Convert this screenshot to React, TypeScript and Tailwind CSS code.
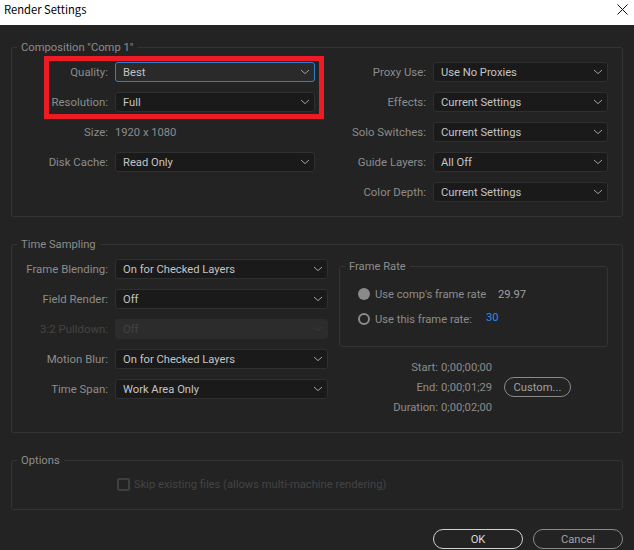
import type { ReactNode } from 'react';

function Chevron({ dim }: { dim?: boolean }) {
  return (
    <svg width="10" height="6" viewBox="0 0 10 6" fill="none" className={dim ? 'text-[#3a3a3a]' : 'text-[#a0a0a0]'}>
      <path d="M1 1l4 3.6L9 1" stroke="currentColor" strokeWidth="1" />
    </svg>
  );
}

function Dropdown({ value, width, focus, disabled }: { value: string; width: string; focus?: boolean; disabled?: boolean }) {
  let look = 'bg-[#1a1a1a] border-[#2f2f2f] text-[#c4c4c4]';
  if (focus) look = 'bg-[#2a2a2a] border-[#2f7fd4] text-[#c4c4c4]';
  if (disabled) look = 'bg-[#2c2c2c] border-[#2c2c2c] text-[#434343]';
  return (
    <div className={`${width} ${look} h-5 flex items-center justify-between pl-[7px] pr-[4px] border rounded-[3px] text-[11.2px]`}>
      <span className="pt-[2px]">{value}</span>
      <Chevron dim={disabled} />
    </div>
  );
}

function Row({ label, labelWidth, disabled, children }: { label: string; labelWidth: string; disabled?: boolean; children: ReactNode }) {
  return (
    <div className="flex items-center gap-[7px] h-5">
      <div className={`${labelWidth} pt-[2px] text-right text-[11.4px] ${disabled ? 'text-[#434343]' : 'text-[#8c8c8c]'}`}>{label}</div>
      {children}
    </div>
  );
}

function Group({ title, height, className, children }: { title: string; height: string; className?: string; children: ReactNode }) {
  return (
    <fieldset className={`${height} ${className ?? ''} border border-[#343434] rounded-[3px]`}>
      <legend className="ml-[5px] px-[4px] h-4 leading-[18px] text-[11.2px] text-[#8c8c8c]">{title}</legend>
      {children}
    </fieldset>
  );
}

function Radio({ filled, label }: { filled?: boolean; label: string }) {
  return (
    <div className="flex items-center gap-[5px] whitespace-nowrap">
      <div className={`size-[12px] rounded-full ${filled ? 'bg-[#8a8a8a]' : 'border-2 border-[#8a8a8a]'}`} />
      <span className="pt-[2px] text-[11.2px] text-[#8c8c8c]">{label}</span>
    </div>
  );
}

function Pill({ label, width, strong }: { label: string; width: string; strong?: boolean }) {
  return (
    <div className={`${width} h-5 flex items-center justify-center rounded-full border text-[11.2px] ${strong ? 'border-[#d0d0d0] text-[#d8d8d8]' : 'border-[#8a8a8a] text-[#a0a0a0]'}`}>
      <span className="pt-[2px]">{label}</span>
    </div>
  );
}

function TimeRow({ label, value, children }: { label: string; value: string; children?: ReactNode }) {
  return (
    <div className="flex items-center h-5 text-[11.2px] text-[#8c8c8c]">
      <span className="w-[99px] pt-[2px] text-right">{label}</span>
      <span className="ml-[3px] w-[52px] pt-[2px] whitespace-nowrap">{value}</span>
      {children}
    </div>
  );
}

export default function App() {
  return (
    <div className='w-[634px] h-[550px] overflow-hidden flex flex-col bg-[#232323] font-["Roboto","Noto_Sans",sans-serif]'>
      <div className='h-[25px] shrink-0 bg-white flex items-start justify-between pt-[1px] pl-1 pr-[6px] text-[11.2px] leading-4 text-black font-["Noto_Sans_CJK_KR",sans-serif]'>
        <span>Render Settings</span>
        <svg width="11" height="11" viewBox="0 0 11 11" fill="none" className="mt-[3px]">
          <path d="M.5.5l10 10M10.5.5l-10 10" stroke="#111" strokeWidth="1" />
        </svg>
      </div>

      <div className="relative flex flex-col px-[11px] pt-[14px]">
        <Group title={'Composition "Comp 1"'} height="h-[178px]">
          <div className="flex pt-[7px]">
            <div className="flex flex-col gap-[10px]">
              <Row label="Quality:" labelWidth="w-[96px]">
                <Dropdown value="Best" width="w-[200px]" focus />
              </Row>
              <Row label="Resolution:" labelWidth="w-[96px]">
                <Dropdown value="Full" width="w-[200px]" />
              </Row>
              <Row label="Size:" labelWidth="w-[96px]">
                <span className="pt-[2px] text-[11.2px] text-[#8c8c8c]">1920 x 1080</span>
              </Row>
              <Row label="Disk Cache:" labelWidth="w-[96px]">
                <Dropdown value="Read Only" width="w-[200px]" />
              </Row>
            </div>
            <div className="ml-[16px] flex flex-col gap-[10px]">
              <Row label="Proxy Use:" labelWidth="w-[95px]">
                <Dropdown value="Use No Proxies" width="w-[175px]" />
              </Row>
              <Row label="Effects:" labelWidth="w-[95px]">
                <Dropdown value="Current Settings" width="w-[175px]" />
              </Row>
              <Row label="Solo Switches:" labelWidth="w-[95px]">
                <Dropdown value="Current Settings" width="w-[175px]" />
              </Row>
              <Row label="Guide Layers:" labelWidth="w-[95px]">
                <Dropdown value="All Off" width="w-[175px]" />
              </Row>
              <Row label="Color Depth:" labelWidth="w-[95px]">
                <Dropdown value="Current Settings" width="w-[175px]" />
              </Row>
            </div>
          </div>
        </Group>

        <Group title="Time Sampling" height="h-[197px]" className="mt-[19px]">
          <div className="flex">
            <div className="flex flex-col gap-[10px] pt-[7px]">
              <Row label="Frame Blending:" labelWidth="w-[96px]">
                <Dropdown value="On for Checked Layers" width="w-[213px]" />
              </Row>
              <Row label="Field Render:" labelWidth="w-[96px]">
                <Dropdown value="Off" width="w-[213px]" />
              </Row>
              <Row label="3:2 Pulldown:" labelWidth="w-[96px]" disabled>
                <Dropdown value="Off" width="w-[213px]" disabled />
              </Row>
              <Row label="Motion Blur:" labelWidth="w-[96px]">
                <Dropdown value="On for Checked Layers" width="w-[213px]" />
              </Row>
              <Row label="Time Span:" labelWidth="w-[96px]">
                <Dropdown value="Work Area Only" width="w-[213px]" />
              </Row>
            </div>
            <div className="ml-[11px] flex flex-col">
              <Group title="Frame Rate" height="h-[89px]" className="w-[269px] mt-[6px]">
                <div className="flex flex-col gap-[6px] pl-[18px] pt-[11px]">
                  <div className="flex items-center">
                    <div className="w-[135px]">
                      <Radio filled label="Use comp's frame rate" />
                    </div>
                    <span className="ml-[5px] pt-[2px] text-[11.2px] text-[#a0a0a0]">29.97</span>
                  </div>
                  <div className="flex items-center">
                    <div className="w-[128px]">
                      <Radio label="Use this frame rate:" />
                    </div>
                    <span className="-mt-[1px] text-[11.2px] text-[#2d8ceb]">30</span>
                  </div>
                </div>
              </Group>
              <div className="mt-[10px] flex flex-col">
                <TimeRow label="Start:" value="0;00;00;00" />
                <TimeRow label="End:" value="0;00;01;29">
                  <div className="ml-[11px]">
                    <Pill label="Custom..." width="w-[67px]" />
                  </div>
                </TimeRow>
                <TimeRow label="Duration:" value="0;00;02;00" />
              </div>
            </div>
          </div>
        </Group>

        <Group title="Options" height="h-[58px]" className="mt-[19px]">
          <div className="flex items-center gap-[4px] pl-[105px] pt-[7px]">
            <div className="size-[13px] rounded-[2px] border-2 border-[#3f3f3f]" />
            <span className="pt-[2px] text-[11.2px] text-[#434343]">Skip existing files (allows multi-machine rendering)</span>
          </div>
        </Group>

        <div className="mt-[19px] flex justify-end gap-[10px]">
          <Pill label="OK" width="w-[90px]" strong />
          <Pill label="Cancel" width="w-[90px]" />
        </div>

        <div className="absolute left-[44px] top-[31px] w-[280px] h-[63px] border-[5px] border-[#ed1c24]" />
      </div>
    </div>
  );
}
